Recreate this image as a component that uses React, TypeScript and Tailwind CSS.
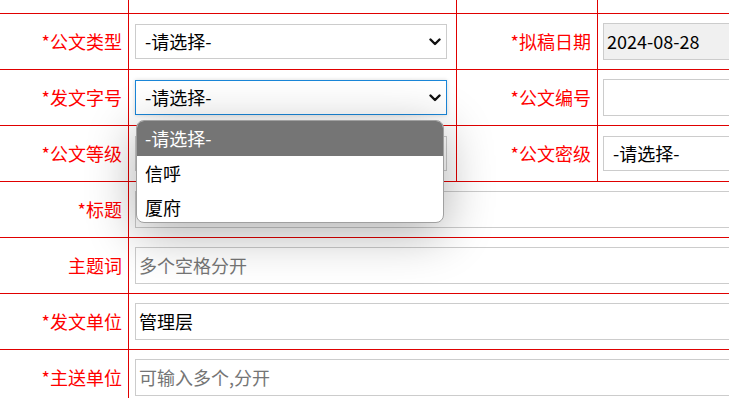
import React from "react";

const font = { fontFamily: '"Noto Sans CJK SC", "Noto Sans", sans-serif' };

function Chevron() {
  return (
    <svg width="12" height="8" viewBox="0 0 12 8" className="absolute right-[5px] top-1/2 -translate-y-1/2">
      <polyline points="1.5,1.5 6,6 10.5,1.5" fill="none" stroke="#111" strokeWidth="2.4" strokeLinecap="round" strokeLinejoin="round" />
    </svg>
  );
}

function FakeSelect({ focused, hidden }: { focused?: boolean; hidden?: boolean }) {
  return (
    <div
      className={`relative h-[35px] w-[312px] bg-white flex items-center pl-[9px] text-[18px] text-black ${
        focused ? "border border-[#1a86d8] shadow-[0_0_4px_rgba(0,0,0,0.15)]" : "border border-[#cccccc]"
      }`}
    >
      {hidden ? null : "-请选择-"}
      <Chevron />
    </div>
  );
}

function Label({ text, w }: { text: string; w: string }) {
  return (
    <div className={`${w} shrink-0 border-r border-[#e00000] flex items-center justify-end pr-[6px] text-[18px] text-[#ff0000]`}>
      {text}
    </div>
  );
}

function Row({ children }: { children: React.ReactNode }) {
  return <div className="flex h-[56px] border-b border-[#e00000]">{children}</div>;
}

export default function App() {
  return (
    <div className="relative w-[729px] h-[398px] overflow-hidden bg-white" style={font}>
      <div className="w-[900px]">
        <div className="flex h-[14px] border-b border-[#e00000]">
          <div className="w-[129px] shrink-0 border-r border-[#e00000]" />
          <div className="w-[328px] shrink-0 border-r border-[#e00000]" />
          <div className="w-[141px] shrink-0 border-r border-[#e00000]" />
          <div className="flex-1" />
        </div>

        <Row>
          <Label text="*公文类型" w="w-[129px]" />
          <div className="w-[328px] shrink-0 border-r border-[#e00000] flex items-center pl-[6px]">
            <FakeSelect />
          </div>
          <Label text="*拟稿日期" w="w-[141px]" />
          <div className="flex-1 flex items-center pl-[5px]">
            <div className="h-[37px] w-[300px] bg-[#f0f0f0] border border-[#cccccc] flex items-center pl-[3px] text-[18px] text-black">
              2024-08-28
            </div>
          </div>
        </Row>

        <Row>
          <Label text="*发文字号" w="w-[129px]" />
          <div className="w-[328px] shrink-0 border-r border-[#e00000] flex items-center pl-[6px]">
            <FakeSelect focused />
          </div>
          <Label text="*公文编号" w="w-[141px]" />
          <div className="flex-1 flex items-center pl-[5px]">
            <div className="h-[37px] w-[300px] bg-white border border-[#cccccc]" />
          </div>
        </Row>

        <Row>
          <Label text="*公文等级" w="w-[129px]" />
          <div className="w-[328px] shrink-0 border-r border-[#e00000] flex items-center pl-[6px]">
            <FakeSelect hidden />
          </div>
          <Label text="*公文密级" w="w-[141px]" />
          <div className="flex-1 flex items-center pl-[5px]">
            <div className="h-[35px] w-[300px] bg-white border border-[#cccccc] flex items-center pl-[9px] text-[18px] text-black">
              -请选择-
            </div>
          </div>
        </Row>

        <Row>
          <Label text="*标题" w="w-[129px]" />
          <div className="flex-1 flex items-center pl-[6px]">
            <div className="h-[37px] w-[700px] bg-white border border-[#cccccc]" />
          </div>
        </Row>

        <Row>
          <Label text="主题词" w="w-[129px]" />
          <div className="flex-1 flex items-center pl-[6px]">
            <div className="h-[37px] w-[700px] bg-white border border-[#cccccc] flex items-center pl-[3px] text-[18px] text-[#757575]">
              多个空格分开
            </div>
          </div>
        </Row>

        <Row>
          <Label text="*发文单位" w="w-[129px]" />
          <div className="flex-1 flex items-center pl-[6px]">
            <div className="h-[37px] w-[700px] bg-white border border-[#cccccc] flex items-center pl-[3px] text-[18px] text-black">
              管理层
            </div>
          </div>
        </Row>

        <Row>
          <Label text="*主送单位" w="w-[129px]" />
          <div className="flex-1 flex items-center pl-[6px]">
            <div className="h-[37px] w-[700px] bg-white border border-[#cccccc] flex items-center pl-[3px] text-[18px] text-[#757575]">
              可输入多个,分开
            </div>
          </div>
        </Row>
      </div>

      <div className="absolute left-[136px] top-[120px] w-[308px] h-[103px] rounded-[8px] overflow-hidden bg-white border border-[#a0a0a0] shadow-[0_10px_50px_rgba(0,0,0,0.32)] text-[18px]">
        <div className="h-[35px] bg-[#757575] text-white flex items-center pl-[8px]">-请选择-</div>
        <div className="h-[34px] text-black flex items-center pl-[8px]">信呼</div>
        <div className="h-[34px] text-black flex items-center pl-[8px]">厦府</div>
      </div>
    </div>
  );
}
